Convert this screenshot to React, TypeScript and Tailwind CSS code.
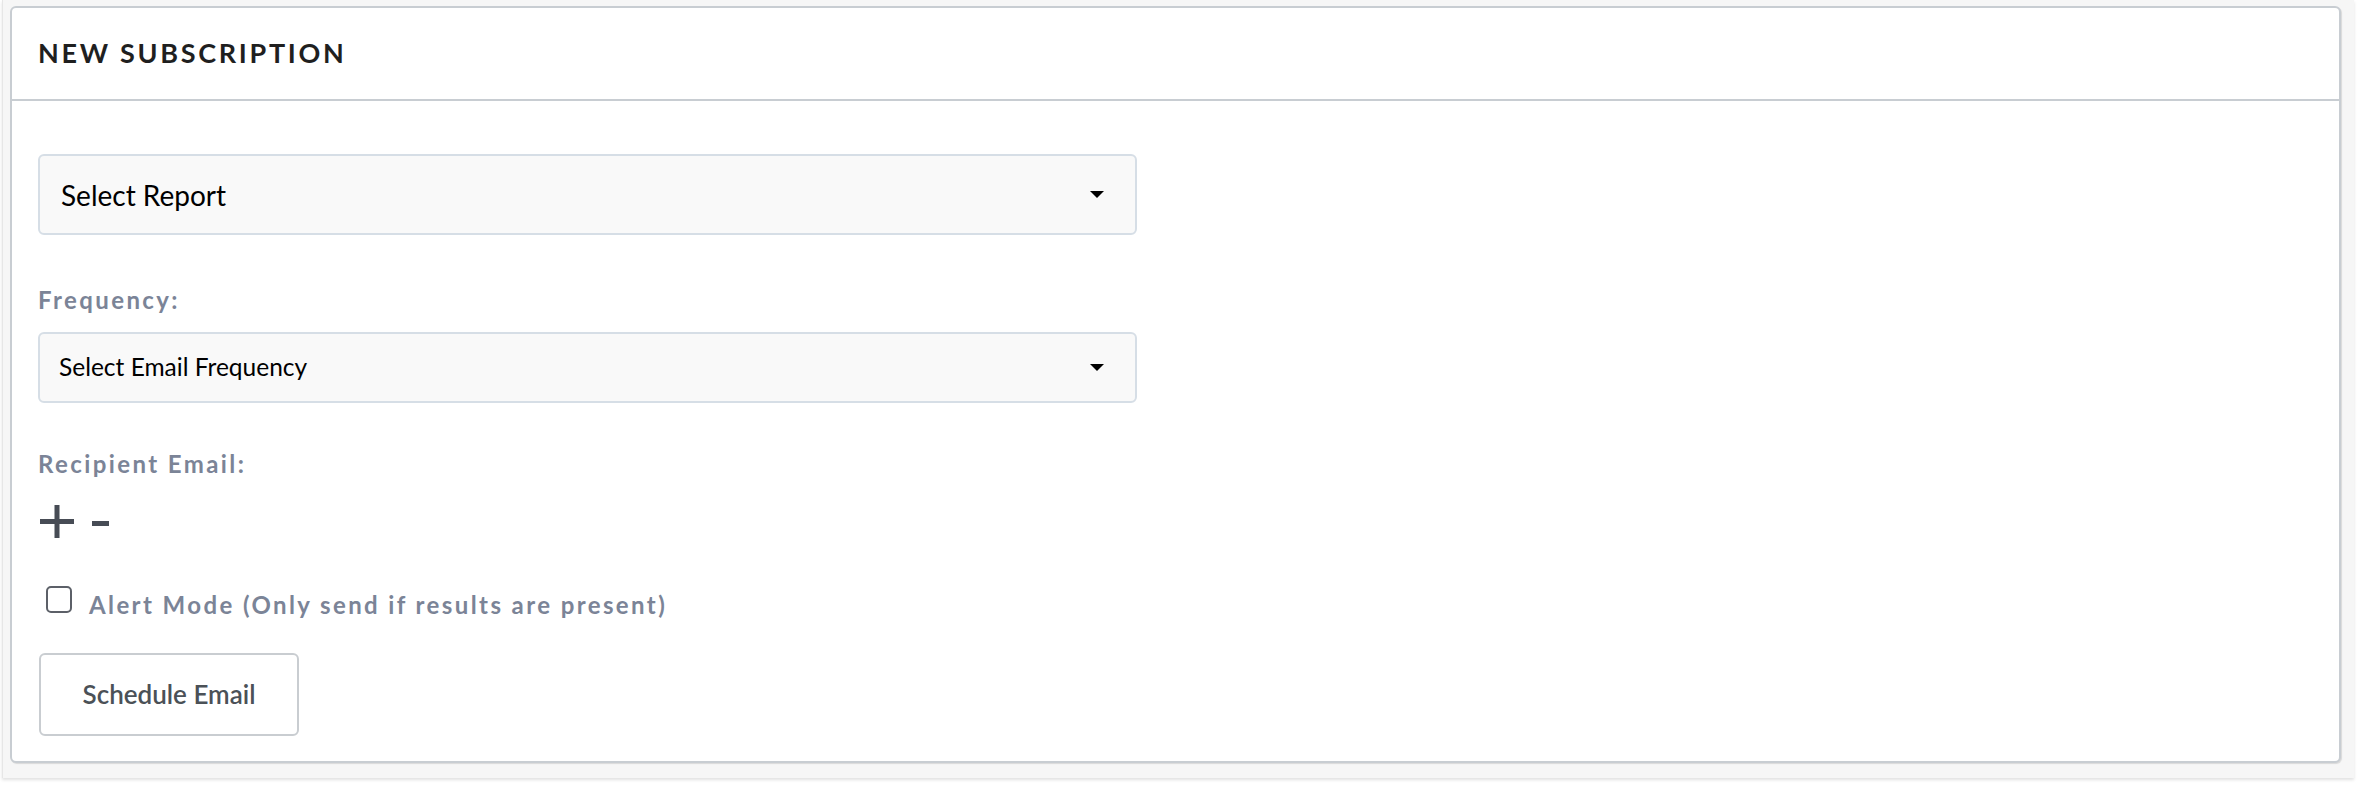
function Caret() {
  return <span className="h-0 w-0 border-x-[7px] border-t-[7px] border-x-transparent border-t-black" />;
}

function SelectBox({ label, big }: { label: string; big?: boolean }) {
  return (
    <div
      className={
        big
          ? "flex h-[81px] w-[1099px] items-center justify-between rounded-md border-2 border-[#d6dee6] bg-[#f9f9f9] pl-[21px] pr-[31px] text-[28px] text-black"
          : "flex h-[71px] w-[1099px] items-center justify-between rounded-md border-2 border-[#d6dee6] bg-[#f9f9f9] pl-[19px] pr-[31px] text-[24.5px] text-black"
      }
    >
      <span>{label}</span>
      <Caret />
    </div>
  );
}

function App() {
  return (
    <div className="min-h-screen bg-white font-['Lato','Liberation_Sans',sans-serif]">
      {/* OUTER PANEL */}
      <div className="ml-[2px] mr-[4px] h-[778px] border-l border-[#e6e6e6] bg-[#f6f6f6] pl-[7px] pr-[13px] pt-[6px] shadow-[0_2px_3px_rgba(0,0,0,0.12)]">
        {/* CARD */}
        <div className="flex h-[757px] flex-col rounded-md border-2 border-[#c8cdd2] bg-white shadow-[1px_1px_1px_rgba(0,0,0,0.12)]">
          {/* HEADER */}
          <div className="flex h-[93px] shrink-0 items-center border-b-2 border-[#c8cdd2] px-[26px]">
            <h2 className="text-[27px] font-bold tracking-[0.1em] text-[#1f1f1f]">NEW SUBSCRIPTION</h2>
          </div>

          {/* FORM */}
          <div className="flex flex-col items-start px-[26px] pt-[53px]">
            <SelectBox label="Select Report" big />

            <label className="mt-[50px] text-[24px] font-bold leading-[30px] tracking-[0.1em] text-[#7b8497]">
              Frequency:
            </label>
            <div className="mt-[17px]">
              <SelectBox label="Select Email Frequency" />
            </div>

            <label className="mt-[46px] text-[24px] font-bold leading-[30px] tracking-[0.1em] text-[#7b8497]">
              Recipient Email:
            </label>
            <div className="ml-[2px] mt-[26px] flex items-center gap-[18px]">
              <svg width="34" height="33" viewBox="0 0 34 33" className="fill-[#474c55]">
                <rect x="0" y="14" width="34" height="5" />
                <rect x="14.5" y="0" width="5" height="33" />
              </svg>
              <svg width="17" height="5" viewBox="0 0 17 5" className="mt-[3px] fill-[#474c55]">
                <rect x="0" y="0" width="17" height="5" />
              </svg>
            </div>

            {/* ALERT MODE */}
            <div className="ml-[8px] mt-[48px] flex items-start gap-[17px]">
              <span className="h-[27px] w-[26px] rounded-[5px] border-[2.5px] border-[#5c6068] bg-white" />
              <span className="mt-[4px] text-[24px] font-bold leading-[30px] tracking-[0.1em] text-[#7b8497]">
                Alert Mode (Only send if results are present)
              </span>
            </div>

            <button className="ml-[1px] mt-[33px] h-[83px] w-[260px] rounded-md border-2 border-[#c9cdd1] bg-white text-[26px] font-semibold text-[#4b5157]">
              Schedule Email
            </button>
          </div>
        </div>
      </div>
    </div>
  );
}

export default App;
